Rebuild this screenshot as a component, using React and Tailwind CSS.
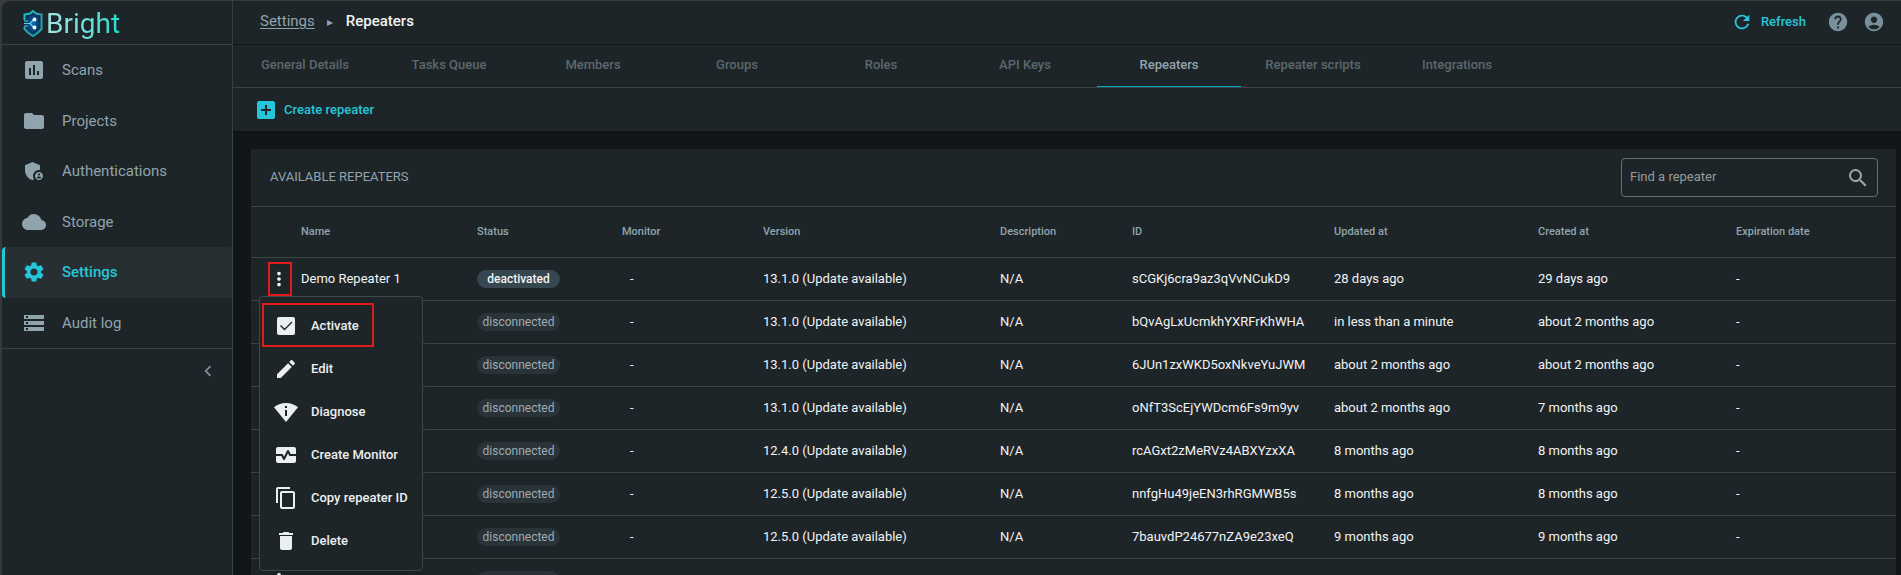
import { useState } from 'react';
import clsx from 'clsx';
import {
  MdAccountCircle,
  MdAddBox,
  MdAdminPanelSettings,
  MdAssessment,
  MdCloud,
  MdContentCopy,
  MdDelete,
  MdEdit,
  MdFolder,
  MdHelp,
  MdKeyboardArrowLeft,
  MdMonitorHeart,
  MdMoreVert,
  MdPermScanWifi,
  MdRefresh,
  MdSearch,
  MdSettings,
  MdStorage,
} from 'react-icons/md';

const NAV_ITEMS = [
  { label: 'Scans', icon: MdAssessment },
  { label: 'Projects', icon: MdFolder },
  { label: 'Authentications', icon: MdAdminPanelSettings },
  { label: 'Storage', icon: MdCloud },
  { label: 'Settings', icon: MdSettings, active: true },
  { label: 'Audit log', icon: MdStorage },
];

const TABS = [
  'General Details',
  'Tasks Queue',
  'Members',
  'Groups',
  'Roles',
  'API Keys',
  'Repeaters',
  'Repeater scripts',
  'Integrations',
];

const COLUMNS = [
  { label: 'Name', width: 'w-[176px]' },
  { label: 'Status', width: 'w-[145px]' },
  { label: 'Monitor', width: 'w-[141px]' },
  { label: 'Version', width: 'w-[237px]' },
  { label: 'Description', width: 'w-[132px]' },
  { label: 'ID', width: 'w-[202px]' },
  { label: 'Updated at', width: 'w-[204px]' },
  { label: 'Created at', width: 'w-[198px]' },
  { label: 'Expiration date', width: 'w-[160px]' },
];

const REPEATERS = [
  { name: 'Demo Repeater 1', status: 'deactivated', version: '13.1.0', id: 'sCGKj6cra9az3qVvNCukD9', updated: '28 days ago', created: '29 days ago' },
  { status: 'disconnected', version: '13.1.0', id: 'bQvAgLxUcmkhYXRFrKhWHA', updated: 'in less than a minute', created: 'about 2 months ago' },
  { status: 'disconnected', version: '13.1.0', id: '6JUn1zxWKD5oxNkveYuJWM', updated: 'about 2 months ago', created: 'about 2 months ago' },
  { status: 'disconnected', version: '13.1.0', id: 'oNfT3ScEjYWDcm6Fs9m9yv', updated: 'about 2 months ago', created: '7 months ago' },
  { status: 'disconnected', version: '12.4.0', id: 'rcAGxt2zMeRVz4ABXYzxXA', updated: '8 months ago', created: '8 months ago' },
  { status: 'disconnected', version: '12.5.0', id: 'nnfgHu49jeEN3rhRGMWB5s', updated: '8 months ago', created: '8 months ago' },
  { status: 'disconnected', version: '12.5.0', id: '7bauvdP24677nZA9e23xeQ', updated: '9 months ago', created: '9 months ago' },
  { id: '' },
];

function CheckBoxIcon({ className }) {
  return (
    <svg viewBox="0 0 24 24" className={className} fill="none" aria-hidden="true">
      <rect x="3" y="3" width="18" height="18" rx="2" fill="currentColor" />
      <path d="M6.500 11.500l4 4 7.500-7.500" stroke="#1e2528" strokeWidth="1.400" />
    </svg>
  );
}

const MENU_ITEMS = [
  { label: 'Activate', icon: CheckBoxIcon, highlighted: true },
  { label: 'Edit', icon: MdEdit },
  { label: 'Diagnose', icon: MdPermScanWifi },
  { label: 'Create Monitor', icon: MdMonitorHeart },
  { label: 'Copy repeater ID', icon: MdContentCopy },
  { label: 'Delete', icon: MdDelete },
];

function Logo() {
  return (
    <a href="#" className="flex h-full items-center pt-0.5 pl-5">
      <svg viewBox="0 0 22 30" className="h-[30px] w-[22px]" fill="none" aria-hidden="true">
        <defs>
          <linearGradient id="shield" x1="0" y1="0" x2="1" y2="1">
            <stop offset="0" stopColor="#12c9c0" />
            <stop offset="0.6" stopColor="#2a9fae" />
            <stop offset="1" stopColor="#0fb5a5" />
          </linearGradient>
          <radialGradient id="core">
            <stop offset="0" stopColor="#0f6cc0" />
            <stop offset="1" stopColor="#0b2444" />
          </radialGradient>
        </defs>
        <path
          d="M11 2l3 2.500 5.500 1v14.500l-4 4-4.500 3-4.500-3-4-4v-14.500l5.500-1z"
          fill="url(#core)"
        />
        <path
          d="M2.500 11v-5.500l5.500-1 3-2.500 3 2.500 5.500 1v14.500l-4 4-4.500 3-4.500-3-4-4v-2"
          stroke="url(#shield)"
          strokeWidth="2"
        />
        <path d="M2 14.500h6l4-4M8 14.500l4 4M2 12h4M2 17h4" stroke="#5fd8ec" strokeWidth="1.200" />
        <circle cx="12.500" cy="10.500" r="1.900" fill="#fff" />
        <circle cx="12.500" cy="18.500" r="1.900" fill="#fff" />
      </svg>
      <span className="bg-gradient-to-r from-[#a5e3e6] to-[#0fdcd0] bg-clip-text pl-0.5 text-[28px] leading-9 text-transparent">
        Bright
      </span>
    </a>
  );
}

function Sidebar() {
  return (
    <aside className="w-[231px] shrink-0 border-r border-[#3b4347]">
      <div className="h-11 border-b border-[#3b4347]">
        <Logo />
      </div>
      <nav className="grid h-[304px] auto-rows-fr border-b border-[#3b4347]">
        {NAV_ITEMS.map(({ label, icon: Icon, active }) => (
          <a
            key={label}
            href="#"
            className={clsx(
              'flex items-center border-l-[3px] pl-[17px] text-[15px]',
              active
                ? 'rounded border-[#26c6da] bg-[#282f32] font-medium text-[#26c6da]'
                : 'border-transparent text-[#90a4ae]'
            )}
          >
            <Icon className="mr-4 size-6" />
            {label}
          </a>
        ))}
      </nav>
      <div className="flex justify-end pt-[11px] pr-[13px]">
        <button type="button" aria-label="Collapse sidebar" className="text-[#78909c]">
          <MdKeyboardArrowLeft className="size-[22px]" />
        </button>
      </div>
    </aside>
  );
}

function Header() {
  return (
    <header className="flex h-11 items-center border-b border-[#14181a] pr-[15px] pb-0.5 pl-[27px]">
      <a href="#" className="text-[15px] text-[#90a4ae] underline underline-offset-2">
        Settings
      </a>
      <span className="w-[31px] text-center text-xs text-[#90a4ae]">▸</span>
      <h1 className="text-[15px] font-medium text-[#f1f3f4]">Repeaters</h1>
      <div className="ml-auto flex items-center gap-3 text-[#78909c]">
        <button type="button" className="mr-2 flex items-center gap-2 text-[13px] font-medium text-[#26c6da]">
          <MdRefresh className="size-[22px]" />
          Refresh
        </button>
        <button type="button" aria-label="Help">
          <MdHelp className="size-6 p-px" />
        </button>
        <button type="button" aria-label="Account">
          <MdAccountCircle className="size-6 p-px" />
        </button>
      </div>
    </header>
  );
}

function RepeaterMenu() {
  return (
    <div className="absolute top-[38px] left-2 z-10 w-[164px] rounded border border-[#3e474c] bg-[#1e2528] pt-[7px] pb-2 shadow-lg">
      {MENU_ITEMS.map(({ label, icon: Icon, highlighted }) => (
        <button
          key={label}
          type="button"
          className="relative flex h-[43px] w-full items-center pl-[14px] text-[13px] font-medium whitespace-nowrap text-[#eceff1]"
        >
          <Icon className="mr-[13px] size-6" />
          {label}
          {highlighted && (
            <span className="absolute -top-px left-0.5 h-11 w-28 border-2 border-[#e01b1b]" />
          )}
        </button>
      ))}
    </div>
  );
}

function StatusBadge({ status }) {
  return (
    <span
      className={clsx(
        'block h-[18px] w-[83px] rounded-full text-center text-xs leading-[18px]',
        status === 'deactivated'
          ? 'bg-[#37474f] font-medium text-[#f1f3f4]'
          : 'bg-[#2a3338] text-[#9eabb3]'
      )}
    >
      {status}
    </span>
  );
}

function RepeatersTable({ repeaters, openIndex, onToggleMenu }) {
  return (
    <table className="w-full table-fixed border-separate border-spacing-0 text-left">
      <thead>
        <tr className="h-[51px] text-[11px] text-[#90a4ae]">
          <th className="w-[50px] border-b border-[#3b4347]" aria-label="Actions" />
          {COLUMNS.map(({ label, width }) => (
            <th key={label} className={clsx(width, 'border-b border-[#3b4347] font-medium')}>
              {label}
            </th>
          ))}
        </tr>
      </thead>
      <tbody className="text-[13px] whitespace-nowrap text-[#f1f3f4] [&_td]:border-b [&_td]:border-[#3b4347]">
        {repeaters.map((repeater, index) => (
          <tr key={index} className="h-[43px]">
            <td className="relative pl-[17px]">
              <button
                type="button"
                aria-label="Repeater actions"
                onClick={() => onToggleMenu(index)}
                className={clsx(
                  'flex h-[34px] w-6 items-center justify-center border-2 pr-0.5',
                  index === 0 ? 'border-[#e01b1b]' : 'border-transparent'
                )}
              >
                <MdMoreVert className="size-[22px] shrink-0" />
              </button>
              {openIndex === index && <RepeaterMenu />}
            </td>
            <td>{repeater.name}</td>
            <td>
              <StatusBadge status={repeater.status} />
            </td>
            <td className="pl-2">{repeater.version && '-'}</td>
            <td>{repeater.version && `${repeater.version} (Update available)`}</td>
            <td>{repeater.version && 'N/A'}</td>
            <td>{repeater.id}</td>
            <td>{repeater.updated}</td>
            <td>{repeater.created}</td>
            <td>{repeater.version && '-'}</td>
          </tr>
        ))}
      </tbody>
    </table>
  );
}

export default function App() {
  const [openIndex, setOpenIndex] = useState(0);
  const [query, setQuery] = useState('');

  const repeaters = REPEATERS.filter((r) => r.id.toLowerCase().includes(query.toLowerCase()));

  const toggleMenu = (index) => {
    setOpenIndex(openIndex === index ? null : index);
  };

  return (
    <div className="h-screen overflow-hidden bg-[#3a3a3a] pt-px pl-0.5 font-[Roboto,sans-serif]">
      <div className="flex h-full overflow-hidden rounded-tl-lg bg-[#1e2528]">
        <Sidebar />
        <main className="min-w-0 flex-1 bg-[#121619]">
          <div className="bg-[#1e2528] shadow-sm">
            <Header />

            {/* Tabs */}
            <div className="flex h-[43px] border-b border-[#3b4347]">
              {TABS.map((tab) => (
                <a
                  key={tab}
                  href="#"
                  className={clsx(
                    'w-36 border-b pt-2.5 text-center text-[13px] leading-5 font-medium',
                    tab === 'Repeaters' ? 'border-[#00acc1] text-[#90a4ae]' : 'border-transparent text-[#5c686e]'
                  )}
                >
                  {tab}
                </a>
              ))}
            </div>

            {/* Actions */}
            <div className="flex h-[43px] items-center pl-[21px]">
              <button type="button" className="flex items-center gap-1.5 text-[13px] font-medium text-[#26c6da]">
                <MdAddBox className="size-6" />
                Create repeater
              </button>
            </div>
          </div>

          {/* Repeaters list */}
          <section className="mt-[18px] mr-[5px] ml-[18px] bg-[#1e2528]">
            <div className="flex h-[58px] items-center justify-between border-b border-[#3b4347] pr-[18px] pl-[19px]">
              <h2 className="pb-0.5 text-[13px] text-[#90a4ae]">AVAILABLE REPEATERS</h2>
              <label className="flex h-[39px] w-[257px] items-center rounded border border-[#6b7072] pr-[7px] pl-2 text-[#a3a6a8]">
                <input
                  type="text"
                  aria-label="Find a repeater"
                  placeholder="Find a repeater"
                  value={query}
                  onChange={(e) => setQuery(e.target.value)}
                  className="min-w-0 flex-1 bg-transparent pb-0.5 text-[13px] outline-none placeholder:text-[#969b9d]"
                />
                <MdSearch className="size-6" />
              </label>
            </div>
            <RepeatersTable repeaters={repeaters} openIndex={openIndex} onToggleMenu={toggleMenu} />
          </section>
        </main>
      </div>
    </div>
  );
}
